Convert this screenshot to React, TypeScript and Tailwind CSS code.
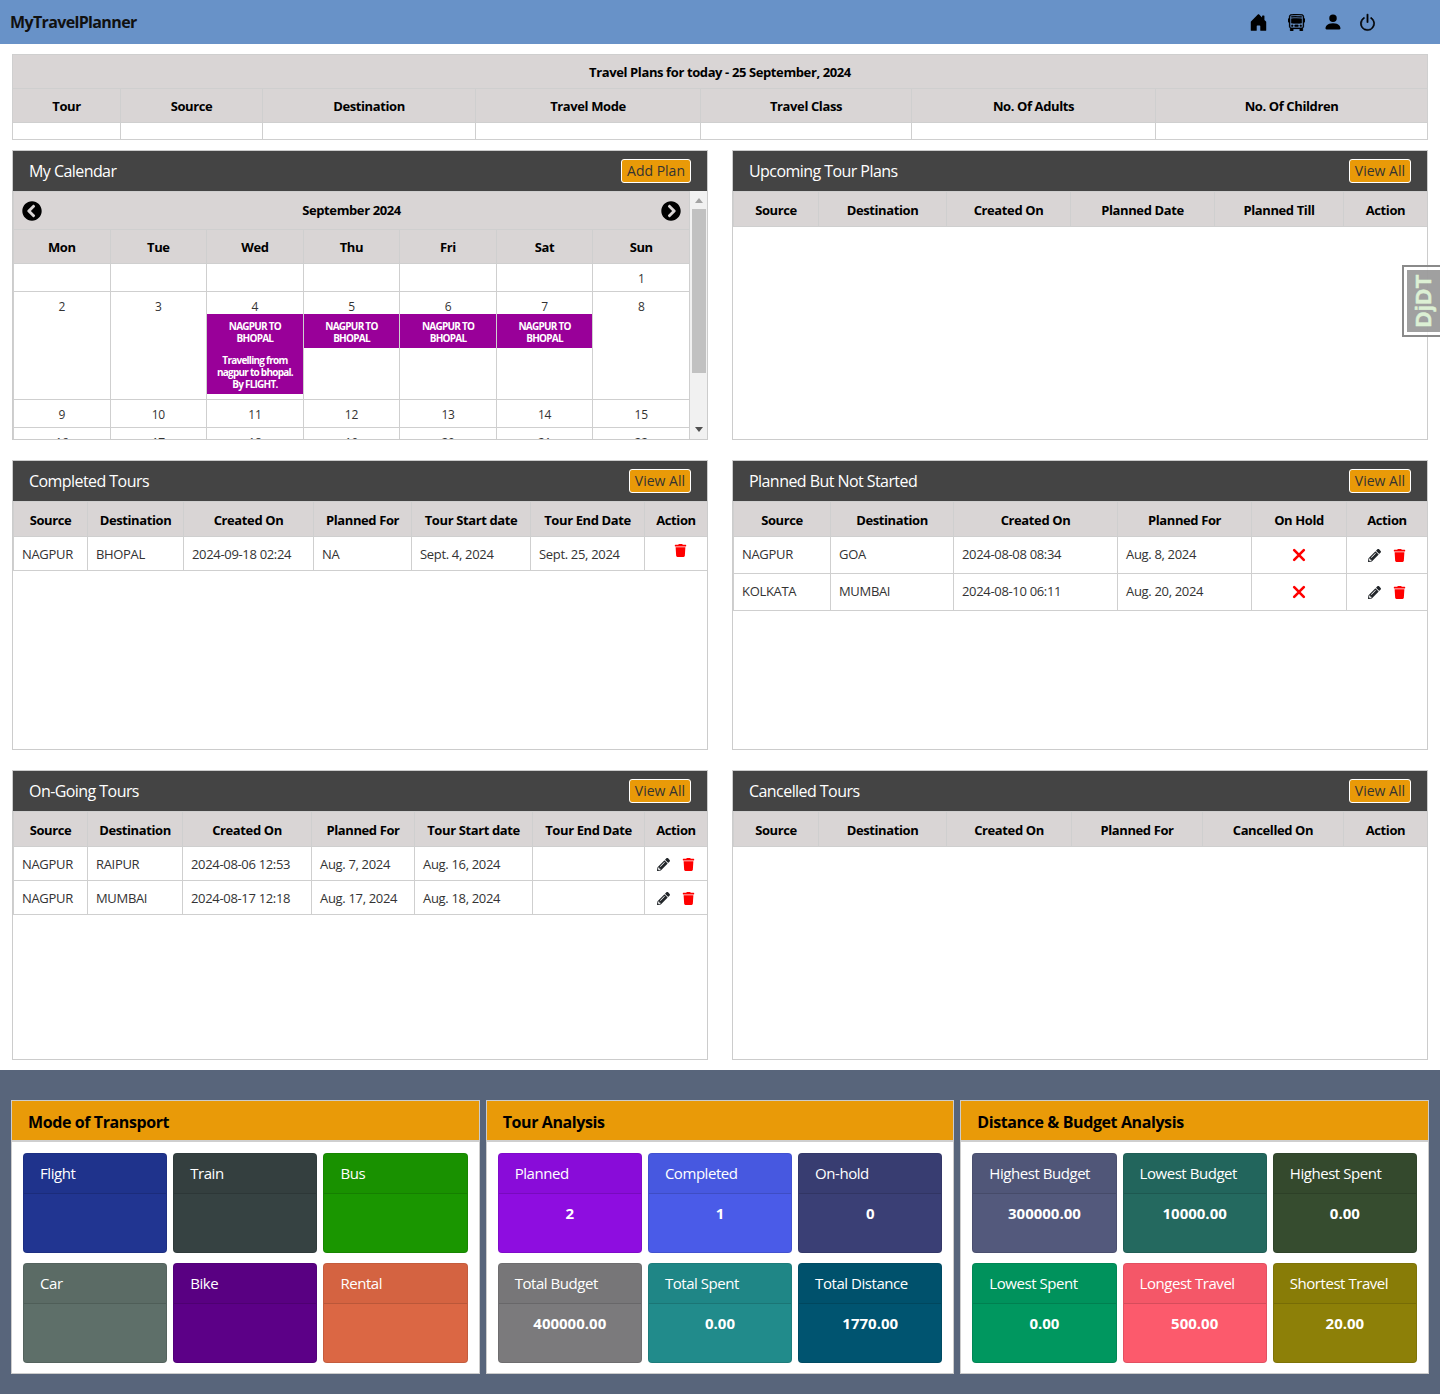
import { FaChevronCircleLeft, FaChevronCircleRight, FaPencilAlt, FaTrash } from "react-icons/fa";
import { BsPower, BsHouseDoorFill, BsBusFront, BsPersonFill, BsXLg } from "react-icons/bs";

type Col = { label: string; w: string };

const thCls = "border border-[#cfcfcf] bg-[#d9d5d5] text-center text-[13px] font-bold tracking-[-0.03em] text-black h-[35px] p-0 pt-[4px]";
const tdCls = "border border-[#cfcfcf] px-[8px] text-left text-[13px] tracking-[-0.025em] text-[#333] whitespace-nowrap";

function Actions() {
  return (
    <div className="flex items-center justify-center gap-[12px] pr-[1px]">
      <FaPencilAlt className="text-[13px] text-[#212529]" />
      <FaTrash className="text-[13px] text-[#ff0000]" />
    </div>
  );
}

function TrashOnly() {
  return (
    <div className="mb-[8px] flex justify-center pl-[8px]">
      <FaTrash className="text-[13px] text-[#ff0000]" />
    </div>
  );
}

function Panel({ title, button = "View All", children }: { title: string; button?: string; children?: React.ReactNode }) {
  return (
    <div className="h-[290px] border border-[#cccccc] bg-white overflow-hidden">
      <div className="flex h-[40px] items-center justify-between bg-[#444444] px-4">
        <span className="text-[16px] tracking-[-0.035em] text-white">{title}</span>
        <button className="h-[24px] rounded-[3px] border border-white bg-[#e99a08] px-[5px] text-[14px] leading-none tracking-normal text-[#333]">
          {button}
        </button>
      </div>
      {children}
    </div>
  );
}

function DataTable({ cols, rows, rowH = "h-[34px] [&>td]:pt-[2px]" }: { cols: Col[]; rows?: React.ReactNode[][]; rowH?: string }) {
  return (
    <table className="w-full table-fixed border-collapse">
      <colgroup>
        {cols.map((c) => (
          <col key={c.label} className={c.w} />
        ))}
      </colgroup>
      <thead>
        <tr>
          {cols.map((c) => (
            <th key={c.label} className={thCls}>{c.label}</th>
          ))}
        </tr>
      </thead>
      <tbody>
        {rows?.map((row, i) => (
          <tr key={i} className={rowH}>
            {row.map((cell, j) => (
              <td key={j} className={tdCls}>{cell}</td>
            ))}
          </tr>
        ))}
      </tbody>
    </table>
  );
}

const Cross = () => (
  <div className="flex justify-center">
    <BsXLg className="text-[14px] text-[#ff0000]" stroke="currentColor" strokeWidth={2} />
  </div>
);

const weekDays = ["Mon", "Tue", "Wed", "Thu", "Fri", "Sat", "Sun"];

function Event({ long }: { long?: boolean }) {
  return (
    <div className={`bg-[#990099] pt-[6px] text-center text-[10px] font-bold leading-[12px] tracking-[-0.075em] text-white ${long ? "h-[80px]" : "h-[34px]"}`}>
      NAGPUR TO<br />BHOPAL
      {long && (
        <>
          <br /><span className="block h-[10px]" />
          Travelling from<br />nagpur to bhopal.<br />By FLIGHT.
        </>
      )}
    </div>
  );
}

function Calendar() {
  const dayCls = "border border-[#cfcfcf] text-center align-top text-[12px] tracking-[-0.02em] text-[#333] p-0";
  return (
    <div className="flex h-[248px] overflow-hidden">
      <div className="flex-1 overflow-hidden">
        <table className="w-full table-fixed border-collapse">
          <thead>
            <tr>
              <th colSpan={7} className="h-[38px] bg-[#d9d5d5] border border-[#cfcfcf] p-0">
                <div className="flex items-center justify-between px-[8px]">
                  <FaChevronCircleLeft className="text-[20px] text-black" />
                  <span className="text-[13px] font-bold tracking-[-0.03em] text-black">September 2024</span>
                  <FaChevronCircleRight className="text-[20px] text-black" />
                </div>
              </th>
            </tr>
            <tr>
              {weekDays.map((d) => (
                <th key={d} className="h-[34px] border border-[#cfcfcf] bg-[#d9d5d5] p-0 pt-[2px] text-[13px] font-bold tracking-[-0.03em] text-black">{d}</th>
              ))}
            </tr>
          </thead>
          <tbody>
            <tr className="h-[28px]">
              {["", "", "", "", "", "", "1"].map((d, i) => (
                <td key={i} className={`${dayCls} pt-[6px]`}>{d}</td>
              ))}
            </tr>
            <tr className="h-[108px]">
              <td className={dayCls}><div className="h-[22px] pt-[6px]">2</div></td>
              <td className={dayCls}><div className="h-[22px] pt-[6px]">3</div></td>
              <td className={dayCls}><div className="h-[22px] pt-[6px]">4</div><Event long /></td>
              <td className={dayCls}><div className="h-[22px] pt-[6px]">5</div><Event /></td>
              <td className={dayCls}><div className="h-[22px] pt-[6px]">6</div><Event /></td>
              <td className={dayCls}><div className="h-[22px] pt-[6px]">7</div><Event /></td>
              <td className={dayCls}><div className="h-[22px] pt-[6px]">8</div></td>
            </tr>
            <tr className="h-[28px]">
              {[9, 10, 11, 12, 13, 14, 15].map((d) => (
                <td key={d} className={`${dayCls} pt-[6px]`}>{d}</td>
              ))}
            </tr>
            <tr className="h-[28px]">
              {[16, 17, 18, 19, 20, 21, 22].map((d) => (
                <td key={d} className={`${dayCls} pt-[6px]`}>{d}</td>
              ))}
            </tr>
          </tbody>
        </table>
      </div>
      <div className="flex w-[17px] flex-col items-center bg-[#f1f1f1]">
        <div className="mt-[7px] h-0 w-0 border-x-[4px] border-b-[5px] border-x-transparent border-b-[#a3a3a3]" />
        <div className="mt-[6px] h-[164px] w-[14px] bg-[#c1c1c1]" />
        <div className="mt-auto mb-[7px] h-0 w-0 border-x-[4px] border-t-[5px] border-x-transparent border-t-[#505050]" />
      </div>
    </div>
  );
}

type Box = { title: string; value?: string; color: string };

function StatBox({ title, value, color }: Box) {
  return (
    <div className={`h-[100px] overflow-hidden rounded-[4px] border border-black/10 text-white ${color}`}>
      <div className="flex h-[40px] items-center border-b border-black/12 bg-black/3 px-[16px] text-[15px] tracking-[-0.03em]">{title}</div>
      <div className="flex h-[38px] items-center justify-center text-[15px] font-bold">{value}</div>
    </div>
  );
}

function StatCard({ title, boxes }: { title: string; boxes: Box[] }) {
  return (
    <div className="border border-[#cccccc] bg-white">
      <div className="flex h-[41px] items-center border-b-2 border-[#cfcfcf] bg-[#e99a08] px-[16px] pt-[2px] text-[16px] font-bold tracking-[-0.025em] text-black">{title}</div>
      <div className="grid grid-cols-3 gap-x-[6px] gap-y-[10px] px-[11px] pt-[11px] pb-[10px]">
        {boxes.map((b) => (
          <StatBox key={b.title} {...b} />
        ))}
      </div>
    </div>
  );
}

export default function App() {
  return (
    <div className="relative w-[1440px] h-[1394px] overflow-hidden bg-white font-['Open_Sans',sans-serif]">
      <nav className="flex h-[44px] items-center bg-[#6892c8] pl-[10px]">
        <span className="text-[16px] font-bold tracking-[-0.04em] text-[#111]">MyTravelPlanner</span>
        <div className="ml-auto mr-[63px] flex items-center text-black">
          <BsHouseDoorFill className="text-[19px]" />
          <BsBusFront className="ml-[20px] text-[17px]" stroke="currentColor" strokeWidth={0.25} />
          <BsPersonFill className="ml-[18px] text-[20px]" />
          <BsPower className="ml-[15px] text-[19px]" stroke="currentColor" strokeWidth={0.5} />
        </div>
      </nav>

      <div className="px-[12px] pt-[10px]">
        <table className="w-full table-fixed border-collapse border border-[#cfcfcf]">
          <colgroup>
            <col className="w-[108px]" />
            <col className="w-[142px]" />
            <col className="w-[213px]" />
            <col className="w-[225px]" />
            <col className="w-[211px]" />
            <col className="w-[244px]" />
            <col />
          </colgroup>
          <thead>
            <tr>
              <th colSpan={7} className="h-[34px] border border-[#cfcfcf] bg-[#d9d5d5] p-0 pt-[2px] text-[13px] font-bold tracking-[-0.03em] text-black">
                Travel Plans for today - 25 September, 2024
              </th>
            </tr>
            <tr>
              {["Tour", "Source", "Destination", "Travel Mode", "Travel Class", "No. Of Adults", "No. Of Children"].map((h) => (
                <th key={h} className="h-[34px] border border-[#cfcfcf] bg-[#d9d5d5] p-0 pt-[2px] text-[13px] font-bold tracking-[-0.03em] text-black">{h}</th>
              ))}
            </tr>
          </thead>
          <tbody>
            <tr className="h-[17px]">
              {[0, 1, 2, 3, 4, 5, 6].map((i) => (
                <td key={i} className="border border-[#cfcfcf]" />
              ))}
            </tr>
          </tbody>
        </table>

        <div className="mt-[10px] grid grid-cols-2 gap-x-[24px] gap-y-[20px]">
          <Panel title="My Calendar" button="Add Plan">
            <Calendar />
          </Panel>
          <Panel title="Upcoming Tour Plans">
            <DataTable
              cols={[
                { label: "Source", w: "w-[85px]" },
                { label: "Destination", w: "w-[128px]" },
                { label: "Created On", w: "w-[124px]" },
                { label: "Planned Date", w: "w-[144px]" },
                { label: "Planned Till", w: "w-[129px]" },
                { label: "Action", w: "w-[84px]" },
              ]}
            />
          </Panel>
          <Panel title="Completed Tours">
            <DataTable
              cols={[
                { label: "Source", w: "w-[74px]" },
                { label: "Destination", w: "w-[96px]" },
                { label: "Created On", w: "w-[130px]" },
                { label: "Planned For", w: "w-[98px]" },
                { label: "Tour Start date", w: "w-[119px]" },
                { label: "Tour End Date", w: "w-[114px]" },
                { label: "Action", w: "w-[63px]" },
              ]}
              rows={[["NAGPUR", "BHOPAL", "2024-09-18 02:24", "NA", "Sept. 4, 2024", "Sept. 25, 2024", <TrashOnly />]]}
            />
          </Panel>
          <Panel title="Planned But Not Started">
            <DataTable
              rowH="h-[37px]"
              cols={[
                { label: "Source", w: "w-[97px]" },
                { label: "Destination", w: "w-[123px]" },
                { label: "Created On", w: "w-[164px]" },
                { label: "Planned For", w: "w-[134px]" },
                { label: "On Hold", w: "w-[95px]" },
                { label: "Action", w: "w-[81px]" },
              ]}
              rows={[
                ["NAGPUR", "GOA", "2024-08-08 08:34", "Aug. 8, 2024", <Cross />, <Actions />],
                ["KOLKATA", "MUMBAI", "2024-08-10 06:11", "Aug. 20, 2024", <Cross />, <Actions />],
              ]}
            />
          </Panel>
          <Panel title="On-Going Tours">
            <DataTable
              cols={[
                { label: "Source", w: "w-[74px]" },
                { label: "Destination", w: "w-[95px]" },
                { label: "Created On", w: "w-[129px]" },
                { label: "Planned For", w: "w-[103px]" },
                { label: "Tour Start date", w: "w-[118px]" },
                { label: "Tour End Date", w: "w-[112px]" },
                { label: "Action", w: "w-[63px]" },
              ]}
              rows={[
                ["NAGPUR", "RAIPUR", "2024-08-06 12:53", "Aug. 7, 2024", "Aug. 16, 2024", "", <Actions />],
                ["NAGPUR", "MUMBAI", "2024-08-17 12:18", "Aug. 17, 2024", "Aug. 18, 2024", "", <Actions />],
              ]}
            />
          </Panel>
          <Panel title="Cancelled Tours">
            <DataTable
              cols={[
                { label: "Source", w: "w-[85px]" },
                { label: "Destination", w: "w-[128px]" },
                { label: "Created On", w: "w-[125px]" },
                { label: "Planned For", w: "w-[131px]" },
                { label: "Cancelled On", w: "w-[141px]" },
                { label: "Action", w: "w-[84px]" },
              ]}
            />
          </Panel>
        </div>
      </div>

      <div className="mt-[10px] grid h-[324px] grid-cols-3 items-start gap-x-[6px] bg-[#58657b] px-[11px] pt-[30px]">
        <StatCard
          title="Mode of Transport"
          boxes={[
            { title: "Flight", color: "bg-[#213591]" },
            { title: "Train", color: "bg-[#364242]" },
            { title: "Bus", color: "bg-[#1a9600]" },
            { title: "Car", color: "bg-[#5e6f69]" },
            { title: "Bike", color: "bg-[#5c0087]" },
            { title: "Rental", color: "bg-[#db6744]" },
          ]}
        />
        <StatCard
          title="Tour Analysis"
          boxes={[
            { title: "Planned", value: "2", color: "bg-[#8e0de0]" },
            { title: "Completed", value: "1", color: "bg-[#4a5be8]" },
            { title: "On-hold", value: "0", color: "bg-[#3a3f75]" },
            { title: "Total Budget", value: "400000.00", color: "bg-[#7b7a7c]" },
            { title: "Total Spent", value: "0.00", color: "bg-[#218b8b]" },
            { title: "Total Distance", value: "1770.00", color: "bg-[#005470]" },
          ]}
        />
        <StatCard
          title="Distance & Budget Analysis"
          boxes={[
            { title: "Highest Budget", value: "300000.00", color: "bg-[#53597c]" },
            { title: "Lowest Budget", value: "10000.00", color: "bg-[#24695f]" },
            { title: "Highest Spent", value: "0.00", color: "bg-[#364c2f]" },
            { title: "Lowest Spent", value: "0.00", color: "bg-[#00975f]" },
            { title: "Longest Travel", value: "500.00", color: "bg-[#fc5a6c]" },
            { title: "Shortest Travel", value: "20.00", color: "bg-[#8d8008]" },
          ]}
        />
      </div>

      {/* debug toolbar handle */}
      <div className="absolute right-0 top-[265px] flex h-[72px] w-[38px] items-center justify-center border-2 border-r-0 border-[#8a8a8a] bg-white/80 pl-[3px] pt-[3px] pb-[3px]">
        <div className="flex h-full w-full items-center justify-center bg-[#808080]/75">
          <span className="-rotate-90 whitespace-nowrap font-['Liberation_Sans',sans-serif] text-[22px] font-bold leading-none tracking-[0.02em] text-[#dcf0d4] [-webkit-text-stroke:0.5px_#dcf0d4]">DjDT</span>
        </div>
      </div>
    </div>
  );
}
